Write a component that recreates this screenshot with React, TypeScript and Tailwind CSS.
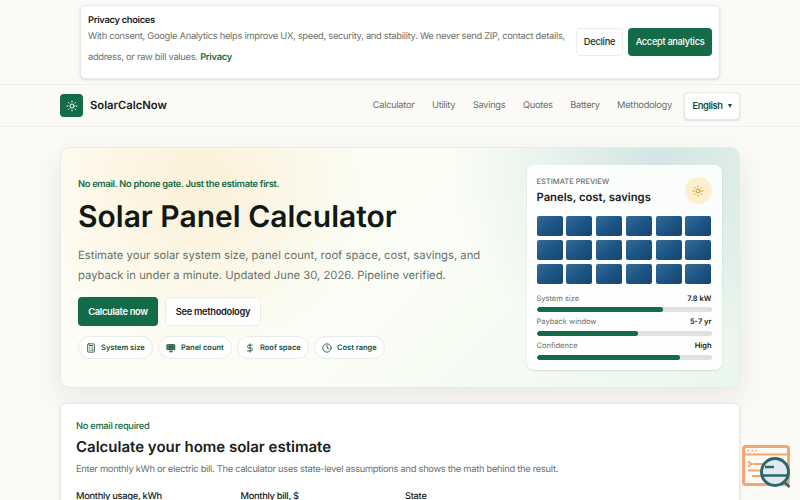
import { Calculator, Clock, DollarSign } from "lucide-react";

const navItems = ["Calculator", "Utility", "Savings", "Quotes", "Battery", "Methodology"];

const metrics = [
  { label: "System size", value: "7.8 kW", pct: 72 },
  { label: "Payback window", value: "5-7 yr", pct: 58 },
  { label: "Confidence", value: "High", pct: 82 },
];

function SunIcon({ className }: { className?: string }) {
  return (
    <svg viewBox="0 0 24 24" fill="none" stroke="currentColor" strokeWidth="2" strokeLinecap="round" className={className}>
      <circle cx="12" cy="12" r="4" />
      <path d="M12 2v2M12 20v2M4.9 4.9l1.4 1.4M17.7 17.7l1.4 1.4M2 12h2M20 12h2M6.3 17.7l-1.4 1.4M19.1 4.9l-1.4 1.4" />
    </svg>
  );
}

function PanelIcon({ className }: { className?: string }) {
  return (
    <svg viewBox="0 0 24 24" fill="none" stroke="currentColor" strokeWidth="2" strokeLinecap="round" strokeLinejoin="round" className={className}>
      <path fill="currentColor" fillOpacity="0.4" d="M3 4h18v12H3z" />
      <path d="M3 8h18M3 12h18M8 4v12M12 4v17M16 4v12M8 21h8" />
    </svg>
  );
}

const chips = [
  { label: "System size", icon: Calculator, width: "w-[75px]" },
  { label: "Panel count", icon: PanelIcon, width: "w-[74px]" },
  { label: "Roof space", icon: DollarSign, width: "w-[72px]" },
  { label: "Cost range", icon: Clock, width: "w-[71px]" },
];

function PrivacyBanner() {
  return (
    <div className="mx-auto mt-[5px] flex h-[74px] w-[640px] items-center justify-between rounded-[5px] border border-[#e8eae5] bg-white px-[7px] shadow-[0_1px_3px_rgba(20,40,30,0.13)]">
      <div className="-mt-[2px] w-[486px]">
        <p className="h-[12px] text-[9.3px] leading-[13px] font-semibold tracking-[-0.031em] text-[#18201b]">Privacy choices</p>
        <p className="text-[9.3px] leading-[21.25px] tracking-[-0.029em] whitespace-nowrap text-[#69716a]">
          With consent, Google Analytics helps improve UX, speed, security, and stability. We never send ZIP, contact details,
          <br />
          address, or raw bill values. <a className="font-semibold text-[#136b48]">Privacy</a>
        </p>
      </div>
      <div className="flex gap-[5px]">
        <button className="h-[28px] w-[47px] rounded-[4px] border border-[#ecedea] bg-white text-[9.3px] font-medium tracking-[-0.031em] text-[#262d28]">
          Decline
        </button>
        <button className="h-[28px] w-[84px] rounded-[4px] bg-[#136b48] text-[9.3px] font-medium tracking-[-0.036em] whitespace-nowrap text-white">
          Accept analytics
        </button>
      </div>
    </div>
  );
}

function Header() {
  return (
    <header className="mt-[5px] h-[43px] border-y border-[#efeeea] bg-[#fbfaf6]">
      <div className="mx-auto flex h-full w-[680px] items-center">
        <span className="flex size-[23px] items-center justify-center rounded-[4px] bg-[#136b48] text-white">
          <SunIcon className="size-[12px]" />
        </span>
        <span className="ml-[7px] text-[11.25px] font-semibold text-[#18201b]">SolarCalcNow</span>
        <nav className="ml-auto flex gap-[17.5px] text-[9.3px] tracking-[-0.03em] text-[#69716a]">
          {navItems.map((item) => (
            <a key={item}>{item}</a>
          ))}
        </nav>
        <button className="ml-[12px] flex h-[28px] w-[56px] items-center justify-center gap-[5px] rounded-[4px] border border-[#e6e8e3] bg-white text-[9.3px] font-semibold tracking-[-0.04em] text-[#164e38] shadow-[0_1px_2px_rgba(20,40,30,0.12)]">
          English
          <svg viewBox="0 0 4 4" className="size-[4px] fill-current">
            <path d="M0 0h4L2 4z" />
          </svg>
        </button>
      </div>
    </header>
  );
}

function EstimatePreview() {
  return (
    <div className="h-[205px] w-[195px] rounded-[7px] border border-white bg-white/90 px-[9px] pt-[9px] shadow-[0_1px_2px_rgba(20,40,30,0.12)]">
      <div className="flex h-[41px] justify-between">
        <div>
          <p className="mt-px text-[7.5px] leading-[12px] font-medium text-[#69716a]">ESTIMATE PREVIEW</p>
          <h2 className="mt-px text-[11.25px] leading-[17px] font-semibold text-[#18201b]">Panels, cost, savings</h2>
        </div>
        <span className="mt-[2px] flex size-[27px] items-center justify-center rounded-full bg-[#fef0cf] text-[#c39a20]">
          <SunIcon className="size-[12px]" />
        </span>
      </div>
      <div className="grid grid-cols-6 gap-[3.75px]">
        {Array.from({ length: 18 }, (_, i) => (
          <span key={i} className="h-[20px] rounded-[2px] bg-linear-to-br from-[#386b95] via-[#1b5687] to-[#194469]" />
        ))}
      </div>
      <div className="mt-[9px]">
        {metrics.map((m) => (
          <div key={m.label} className="h-[23.75px]">
            <div className="flex justify-between text-[7.5px] leading-[12px] text-[#69716a]">
              <span>{m.label}</span>
              <span className="font-semibold text-[#18201b]">{m.value}</span>
            </div>
            <div className="mt-[2.5px] h-[5px] overflow-hidden rounded-full bg-[#dde2de]">
              <div className="h-full rounded-full bg-[#136b48]" style={{ width: `${m.pct}%` }} />
            </div>
          </div>
        ))}
      </div>
    </div>
  );
}

function Hero() {
  return (
    <section className="mx-auto mt-[20px] flex h-[241px] w-[680px] justify-between rounded-[10px] border border-[#e8ebe3] bg-[radial-gradient(circle_at_20%_15%,rgba(248,213,151,0.32),transparent_30%),radial-gradient(circle_at_88%_5%,rgba(96,157,181,0.24),transparent_32%),linear-gradient(135deg,#fffdf6_0%,#fafdf5_55%,#eaf7ed_100%)] py-[17px] pr-[17.5px] pl-[17px] shadow-[0_12px_32px_rgba(30,40,30,0.08)]">
      <div>
        <p className="mt-[12px] text-[9.3px] leading-[15px] font-semibold tracking-[-0.032em] text-[#136b48]">No email. No phone gate. Just the estimate first.</p>
        <h1 className="mt-[6px] text-[30px] leading-[38px] font-semibold whitespace-nowrap text-[#101812]">Solar Panel Calculator</h1>
        <p className="mt-[9px] text-[11.25px] leading-[20px] whitespace-nowrap text-[#69716a]">
          Estimate your solar system size, panel count, roof space, cost, savings, and
          <br />
          payback in under a minute. Updated June 30, 2026. Pipeline verified.
        </p>
        <div className="mt-[12px] flex gap-[7px] text-[9.3px] font-semibold tracking-[-0.032em]">
          <button className="h-[29px] w-[80px] rounded-[4px] bg-[#136b48] text-white">Calculate now</button>
          <button className="h-[29px] w-[96px] rounded-[4px] border border-[#ecedea] bg-white text-[#18201b]">See methodology</button>
        </div>
        <div className="mt-[10px] flex gap-[5px]">
          {chips.map(({ label, icon: Icon, width }) => (
            <span key={label} className={`flex h-[23px] items-center rounded-full border border-[#e8ece6] bg-white/85 pl-[7px] text-[7.5px] font-semibold whitespace-nowrap text-[#164e38] ${width}`}>
              <Icon className="mr-[5px] size-[10px]" />
              {label}
            </span>
          ))}
        </div>
      </div>
      <EstimatePreview />
    </section>
  );
}

function CalculatorCard() {
  return (
    <section className="mx-auto mt-[15px] h-[200px] w-[680px] rounded-[5px] border border-[#e6e8e3] bg-white px-[15px] pt-[15px] shadow-[0_1px_3px_rgba(20,40,30,0.12)]">
      <p className="text-[9.3px] leading-[15px] font-medium tracking-[-0.032em] text-[#136b48]">No email required</p>
      <h2 className="mt-[3px] text-[15px] leading-[20px] font-semibold text-[#18201b]">Calculate your home solar estimate</h2>
      <p className="mt-[5px] text-[9.3px] leading-[16px] tracking-[-0.029em] text-[#69716a]">
        Enter monthly kWh or electric bill. The calculator uses state-level assumptions and shows the math behind the result.
      </p>
      <div className="mt-[12px] grid grid-cols-[164.5px_164.5px_1fr] text-[9.3px] leading-[14px] font-medium tracking-[-0.032em] text-[#18201b]">
        <span>Monthly usage, kWh</span>
        <span>Monthly bill, $</span>
        <span>State</span>
      </div>
    </section>
  );
}

function InspectBadge() {
  return (
    <svg viewBox="0 0 50 45" fill="none" className="fixed top-[444px] left-[741px] h-[45px] w-[50px]">
      <rect x="2.5" y="2.5" width="45" height="38" rx="2.5" fill="#fffaf5" stroke="#f3a671" strokeWidth="3" />
      <path d="M2 10.5h46M7 17.5l3.5 2.5-3.5 2.5M12 20h14M7 26.5h13M11 32h12" stroke="#f3a671" strokeWidth="2" />
      <path d="M6.5 6.5h1.5M10.5 6.5h1.5M14.5 6.5h1.5" stroke="#f3a671" strokeWidth="1.5" />
      <circle cx="34" cy="28" r="13.5" fill="#e0e8f2" stroke="#2d6868" strokeWidth="3" />
      <path d="M24 23h9M22 31.5h24M43.5 38l5 5" stroke="#2d6868" strokeWidth="2.5" />
    </svg>
  );
}

export default function App() {
  return (
    <div className="flex h-[500px] flex-col overflow-hidden bg-[#fbfaf6] font-['Inter',sans-serif] [text-rendering:geometricPrecision] *:shrink-0">
      <PrivacyBanner />
      <Header />
      <Hero />
      <CalculatorCard />
      <InspectBadge />
    </div>
  );
}
